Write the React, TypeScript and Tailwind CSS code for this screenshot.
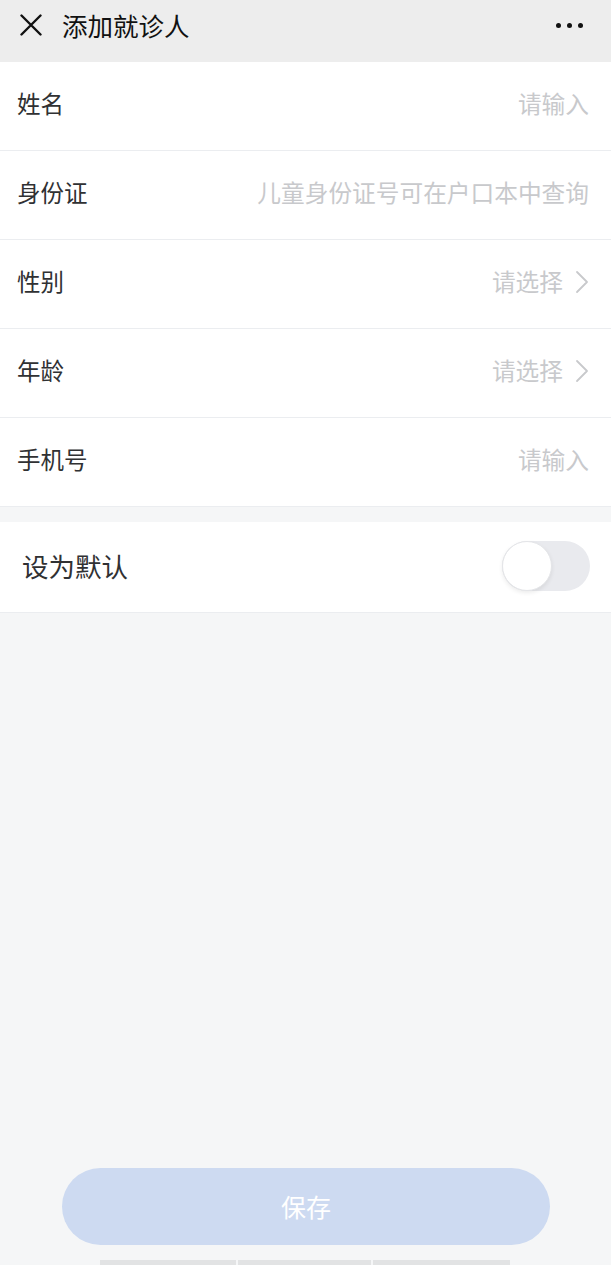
import React from "react";

const font = '"Noto Sans CJK SC", "Noto Sans", sans-serif';

function Chevron() {
  return (
    <svg width="14" height="24" viewBox="0 0 14 24" fill="none" className="ml-[12px]">
      <path d="M2 2 L12 12 L2 22" stroke="#c8c9cc" strokeWidth="1.8" strokeLinecap="round" strokeLinejoin="round" />
    </svg>
  );
}

function Row({ label, placeholder, arrow }: { label: string; placeholder: string; arrow?: boolean }) {
  return (
    <div className="flex h-[89px] items-center justify-between border-b border-[#ebedf0] bg-white pb-[4px] pl-[17px] pr-[22px]">
      <span className="text-[23.5px] text-[#303133]">{label}</span>
      <div className="flex items-center">
        <span className="text-[23.7px] text-[#c8c9cc]">{placeholder}</span>
        {arrow && <Chevron />}
      </div>
    </div>
  );
}

export default function App() {
  return (
    <div className="flex min-h-[1265px] flex-col bg-[#f5f6f7]" style={{ fontFamily: font }}>
      <div className="flex h-[62px] items-center bg-[#ededed] pb-[12px] pl-[20px] pr-[28px]">
        <svg width="22" height="22" viewBox="0 0 22 22" fill="none">
          <path d="M1.5 1.5 L20.5 20.5 M20.5 1.5 L1.5 20.5" stroke="#111" strokeWidth="2.4" strokeLinecap="round" />
        </svg>
        <span className="ml-[20px] text-[25.5px] text-[#111]">添加就诊人</span>
        <div className="ml-auto flex items-center gap-[6px]">
          <span className="h-[5px] w-[5px] rounded-full bg-[#111]" />
          <span className="h-[5px] w-[5px] rounded-full bg-[#111]" />
          <span className="h-[5px] w-[5px] rounded-full bg-[#111]" />
        </div>
      </div>
      <Row label="姓名" placeholder="请输入" />
      <Row label="身份证" placeholder="儿童身份证号可在户口本中查询" />
      <Row label="性别" placeholder="请选择" arrow />
      <Row label="年龄" placeholder="请选择" arrow />
      <Row label="手机号" placeholder="请输入" />
      <div className="mt-[15px] flex h-[91px] items-center justify-between border-b border-[#ebedf0] bg-white pb-[2px] pl-[22px] pr-[21px]">
        <span className="text-[26.5px] text-[#303133]">设为默认</span>
        <div className="flex h-[50px] w-[88px] items-center rounded-full bg-[#e9eaee]">
          <div className="h-[50px] w-[50px] rounded-full border border-[#e4e5e8] bg-white shadow-[0_2px_4px_rgba(0,0,0,0.08)]" />
        </div>
      </div>
      <div className="flex-1" />
      <div className="mx-[62px] mr-[61px] flex h-[77px] items-center justify-center rounded-full bg-[#cddaf1]">
        <span className="text-[25px] text-white">保存</span>
      </div>
      <div className="mt-[15px] flex h-[5px] pl-[100px]">
        <div className="w-[136px] bg-[#e2e3e4]" />
        <div className="ml-[2px] w-[133px] bg-[#e2e3e4]" />
        <div className="ml-[2px] w-[137px] bg-[#e2e3e4]" />
      </div>
    </div>
  );
}
